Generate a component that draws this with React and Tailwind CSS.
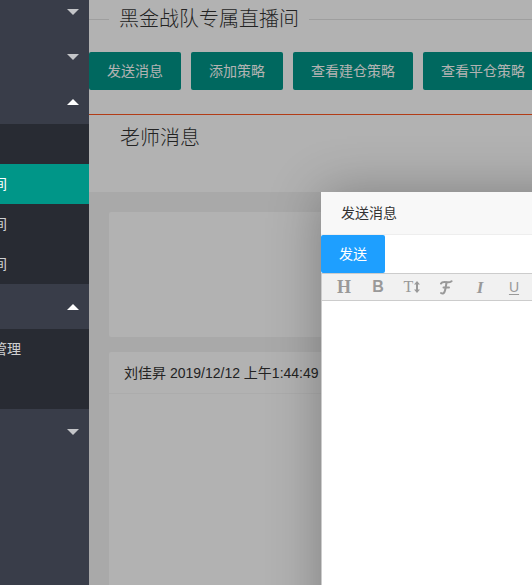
import React from 'react';

const parentArrow = (up) =>
  up ? (
    <span className="absolute right-[10px] top-1/2 -mt-[3px] w-0 h-0 border-x-[6px] border-x-transparent border-b-[6px] border-b-white" />
  ) : (
    <span className="absolute right-[10px] top-1/2 -mt-[3px] w-0 h-0 border-x-[6px] border-x-transparent border-t-[6px] border-t-[rgba(255,255,255,0.7)]" />
  );

function NavParent({ up, className = '' }) {
  return <div className={`relative h-[45px] ${className}`}>{parentArrow(up)}</div>;
}

function NavChild({ text, active }) {
  return (
    <div
      className={`h-[40px] leading-[40px] whitespace-nowrap ${
        active ? 'bg-[#009688] text-white' : 'text-[rgba(255,255,255,0.8)]'
      }`}
    >
      {text && <span className="ml-[-35px]">{text}</span>}
    </div>
  );
}

// script "F" from the editor's font menu
const FontIcon = () => (
  <svg width="14" height="15" viewBox="0 0 14 15" fill="none" stroke="#999" strokeWidth="2" strokeLinecap="round">
    <path d="M2 3.5 C3 1.5 6 1.8 8 2.2 C10 2.6 11.5 2 12.5 1.2" />
    <path d="M7.5 2.5 C7 6 6.5 9.5 5.5 12 C4.8 13.5 3.5 14 2 13" />
    <path d="M4.5 7.5 H10" />
  </svg>
);

// T with up/down arrow (font size)
const SizeIcon = () => (
  <span className="flex items-center">
    <span className="font-['Liberation_Serif'] text-[16px]">T</span>
    <svg width="6" height="12" viewBox="0 0 6 12" fill="#999" className="ml-px">
      <path d="M3 0 L6 3.5 H4 V8.5 H6 L3 12 L0 8.5 H2 V3.5 H0 Z" />
    </svg>
  </span>
);

const tools = [
  { key: 'h', el: <span className="font-['Liberation_Serif'] font-bold text-[18px]">H</span> },
  { key: 'b', el: <span className="font-bold text-[16px]">B</span> },
  { key: 't', el: <SizeIcon /> },
  { key: 'f', el: <FontIcon /> },
  { key: 'i', el: <span className="font-['Liberation_Serif'] italic font-bold text-[17px]">I</span> },
  { key: 'u', el: <span className="underline underline-offset-2 text-[14px]">U</span> },
];

export default function App() {
  return (
    <div className="relative w-[532px] h-[585px] overflow-hidden flex font-['Liberation_Sans','Noto_Sans_CJK_SC',sans-serif] text-[14px]">
      {/* sidebar */}
      <div className="w-[89px] shrink-0 h-full bg-[#393D49] overflow-hidden">
        <NavParent className="mt-[-11px]" />
        <NavParent />
        <NavParent up />
        <div className="bg-[#282B33]">
          <NavChild />
          <NavChild text="直播间" active />
          <NavChild text="直播间" />
          <NavChild text="聊天间" />
        </div>
        <NavParent up />
        <div className="bg-[#282B33]">
          <NavChild text="用户管理" />
          <NavChild />
        </div>
        <NavParent />
      </div>

      {/* main */}
      <div className="relative flex-1 h-full bg-white overflow-hidden">
        <div className="h-[38px] flex items-center">
          <div className="w-[20px] h-px bg-[#e2e2e2]" />
          <span className="px-[10px] text-[20px] leading-[28px] font-light text-[#333] whitespace-nowrap">
            黑金战队专属直播间
          </span>
          <div className="flex-1 h-px bg-[#e2e2e2]" />
        </div>

        <div className="mt-[14px] flex gap-[10px] h-[38px]">
          {['发送消息', '添加策略', '查看建仓策略', '查看平仓策略'].map((t) => (
            <button
              key={t}
              className="shrink-0 h-[38px] px-[18px] bg-[#009688] text-white rounded-[2px] whitespace-nowrap"
            >
              {t}
            </button>
          ))}
        </div>

        <div className="mt-[24px] h-px bg-[#FF5722]" />
        <div className="h-[77px] pl-[31px] pt-[9px]">
          <div className="text-[20px] leading-[28px] font-light text-[#333]">老师消息</div>
        </div>

        <div className="h-[400px] bg-[#f2f2f2] p-[20px]">
          <div className="h-[125px] bg-white rounded-[2px]" />
          <div className="mt-[15px] bg-white rounded-[2px] h-[300px]">
            <div className="h-[42px] leading-[42px] px-[15px] border-b border-[#f6f6f6] text-[#333] whitespace-nowrap">
              刘佳昇 2019/12/12 上午1:44:49
            </div>
          </div>
        </div>

        {/* layer shade */}
        <div className="absolute inset-0 bg-black/30" />

        {/* layer */}
        <div className="absolute left-[232px] top-[192px] w-[420px] h-[500px] bg-white shadow-[1px_1px_50px_rgba(0,0,0,0.3)] flex flex-col">
          <div className="h-[43px] shrink-0 leading-[42px] pl-[20px] bg-[#F8F8F8] border-b border-[#eee] text-[#333]">
            发送消息
          </div>
          <div className="h-[38px] shrink-0">
            <button className="h-[38px] px-[18px] bg-[#1E9FFF] text-white rounded-[2px]">发送</button>
          </div>
          <div className="h-[28px] shrink-0 flex items-center px-[5px] bg-[#f1f1f1] border border-[#ccc] text-[#999]">
            {tools.map((t) => (
              <div key={t.key} className="w-[34px] h-[26px] flex items-center justify-center leading-none">
                {t.el}
              </div>
            ))}
          </div>
          <div className="flex-1 border-x border-b border-[#ccc] bg-white" />
        </div>
      </div>
    </div>
  );
}
